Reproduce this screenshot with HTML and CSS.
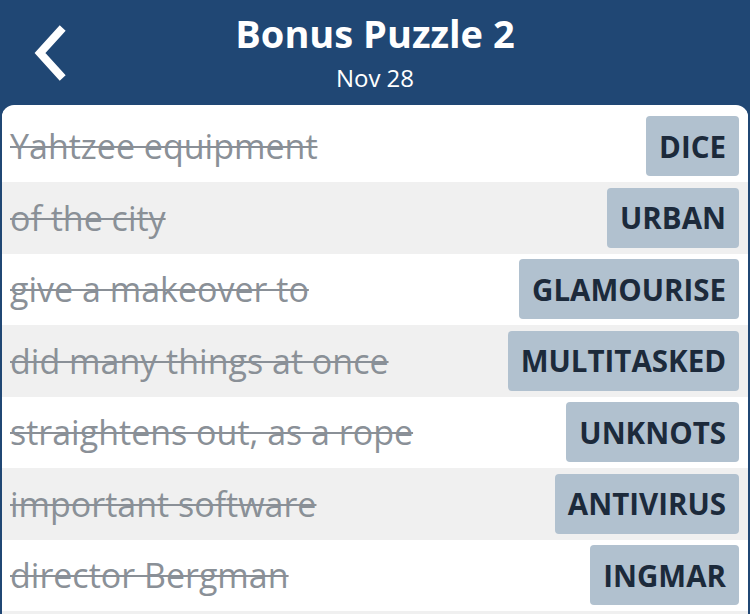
FILE: index.html
```html
<!DOCTYPE html>
<html>
<head>
<meta charset="utf-8">
<link rel="stylesheet" href="styles.css">
</head>
<body>
<div class="app">
  <header class="header">
    <div class="back">
      <svg width="40" height="56" viewBox="0 0 40 56"><path d="M30 6 L10 28 L30 50" fill="none" stroke="#fff" stroke-width="8" stroke-linecap="square" stroke-linejoin="miter"/></svg>
    </div>
    <div class="titles">
      <div class="title">Bonus Puzzle 2</div>
      <div class="subtitle">Nov 28</div>
    </div>
  </header>
  <main class="card">
    <div class="row"><span class="clue">Yahtzee equipment</span><span class="answer">DICE</span></div>
    <div class="row alt"><span class="clue">of the city</span><span class="answer">URBAN</span></div>
    <div class="row"><span class="clue">give a makeover to</span><span class="answer">GLAMOURISE</span></div>
    <div class="row alt"><span class="clue">did many things at once</span><span class="answer">MULTITASKED</span></div>
    <div class="row"><span class="clue">straightens out, as a rope</span><span class="answer">UNKNOTS</span></div>
    <div class="row alt"><span class="clue">important software</span><span class="answer">ANTIVIRUS</span></div>
    <div class="row"><span class="clue">director Bergman</span><span class="answer">INGMAR</span></div>
    <div class="row alt"></div>
  </main>
</div>
</body>
</html>
```
FILE: styles.css
```css
html, body {
  margin: 0;
  padding: 0;
  background: #204774;
  font-family: "Open Sans", "Lato", sans-serif;
  overflow: hidden;
}
.app {
  width: 750px;
  height: 614px;
  display: flex;
  flex-direction: column;
}
.header {
  height: 105px;
  flex: none;
  background: #204774;
  position: relative;
  display: flex;
  justify-content: center;
  color: #fff;
}
.back {
  position: absolute;
  left: 30px;
  top: 25px;
}
.back svg { display: block; }
.titles {
  display: flex;
  flex-direction: column;
  align-items: center;
  padding-top: 10px;
}
.title {
  font-size: 38px;
  font-weight: 700;
  line-height: 46px;
}
.subtitle {
  font-size: 24px;
  line-height: 30px;
  margin-top: 7px;
}
.card {
  flex: 1;
  margin: 0 2px;
  background: #fff;
  border-radius: 12px 12px 0 0;
  padding-top: 5.5px;
  overflow: hidden;
}
.row {
  height: 71.5px;
  display: flex;
  align-items: center;
  justify-content: space-between;
  padding: 0 9px 0 8px;
  box-sizing: border-box;
  background: #fff;
}
.row.alt { background: #f0f0f0; }
.clue {
  font-size: 34px;
  color: #8a9097;
  text-decoration: line-through;
  text-decoration-thickness: 2px;
  white-space: nowrap;
}
.answer {
  height: 60px;
  display: flex;
  align-items: center;
  padding: 0 13px;
  background: #b1c1cf;
  border-radius: 4px;
  color: #1c2a3b;
  font-size: 29.5px;
  font-weight: 700;
  white-space: nowrap;
}
```
